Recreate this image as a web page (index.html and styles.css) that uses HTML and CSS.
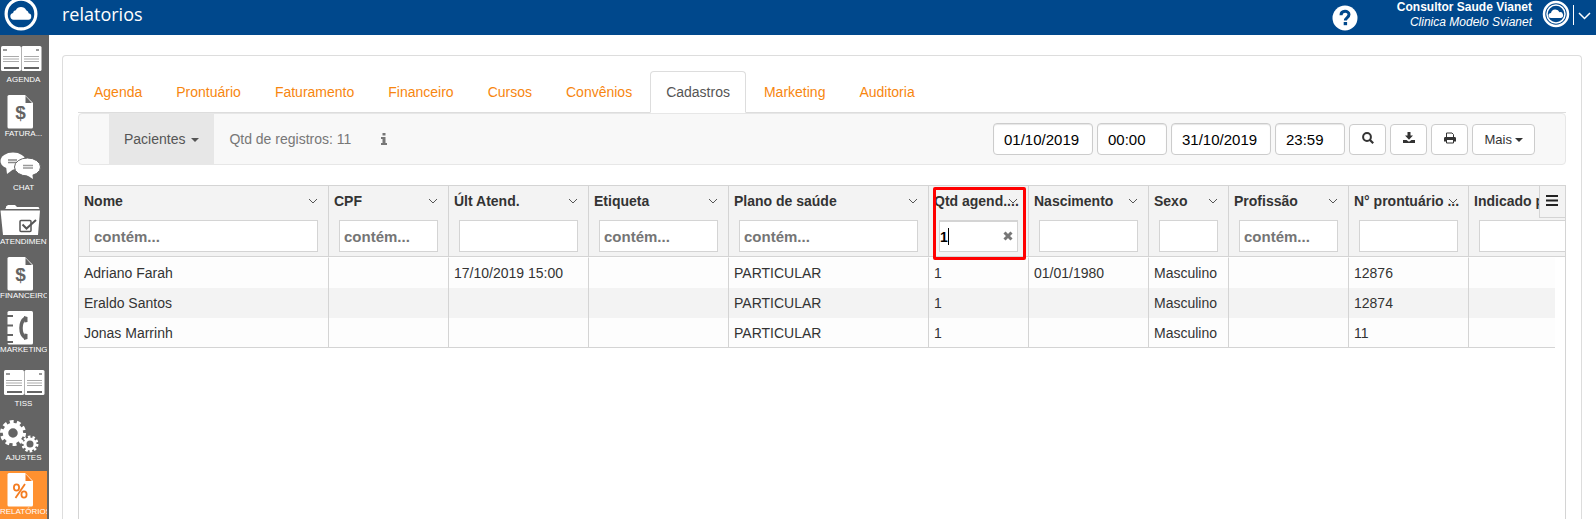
FILE: index.html
```html
<!DOCTYPE html>
<html lang="pt-BR">
<head>
    <meta charset="UTF-8">
    <meta name="viewport" content="width=device-width, initial-scale=1.0">
    <title>relatorios</title>
    <link rel="stylesheet" href="styles.css">
</head>
<body>

<!-- simbolos reutilizados -->
<svg class="sprite" width="0" height="0" aria-hidden="true">
    <symbol id="logo" viewBox="0 0 32 32">
        <circle cx="16" cy="16" r="14" fill="none" stroke="#fff" stroke-width="3"/>
        <path fill="#fff" d="M9 21.500a3.300 3.300 0 0 1-.5-6.500 3 3 0 0 1 2.600-2.600 5.500 5.500 0 0 1 9.800 0 3.200 3.200 0 0 1 2.300 3 3.100 3.100 0 0 1-.2 6.100z"/>
    </symbol>
    <symbol id="logo-small" viewBox="0 0 28 28">
        <circle cx="14" cy="14" r="12" fill="none" stroke="#fff" stroke-width="2.500"/>
        <circle cx="14" cy="14" r="9" fill="none" stroke="#fff" stroke-width="1.500"/>
        <path fill="#fff" d="M9 18a2.500 2.500 0 0 1 0-5 4.500 4.500 0 0 1 8.500-.8A3 3 0 0 1 19 18z"/>
    </symbol>
    <symbol id="book" viewBox="0 0 47 36">
        <rect x="1" y="7" width="20" height="25" rx="1.500" fill="#fff"/>
        <rect x="21.500" y="7" width="20" height="25" rx="1.500" fill="#fff"/>
        <path d="M3 11h4M36 11h3" stroke="#999" stroke-width="2"/>
        <path d="M3 17.500h16M3 20h16M3 22.500h16M24 17.500h15M24 20h15M24 22.500h15" stroke="#aaa"/>
        <path d="M4 29h15M24 29h15" stroke="#666" stroke-width="2"/>
    </symbol>
    <symbol id="doc" viewBox="0 0 47 36">
        <path d="M9 2h16l8 8v24a1.500 1.500 0 0 1-1.500 1.500H9A1.500 1.500 0 0 1 7.500 34V3.500A1.500 1.500 0 0 1 9 2z" fill="#fff"/>
        <path d="M25.500 3v7H32z" fill="currentColor"/>
    </symbol>
    <symbol id="down" viewBox="0 0 10 6">
        <path d="M1 1l4 4 4-4" fill="none" stroke="currentColor"/>
    </symbol>
</svg>

<header class="topbar">
    <a class="brand" href="#" aria-label="Início"><svg width="34" height="34"><use href="#logo"/></svg></a>
    <h1 class="page-title">relatorios</h1>
    <a class="help" href="#" aria-label="Ajuda">
        <svg width="26" height="26" viewBox="0 0 26 26">
            <circle cx="13" cy="13" r="12.500" fill="#fff"/>
            <path d="M9 10.200c0-5.200 8-5 8-.6 0 3-3.600 3-3.600 6" fill="none" stroke="#00488c" stroke-width="3"/>
            <rect x="11.700" y="17" width="3.400" height="3.200" fill="#00488c"/>
        </svg>
    </a>
    <div class="user">
        <strong>Consultor Saude Vianet</strong>
        <em>Clinica Modelo Svianet</em>
    </div>
    <button class="user-menu" aria-label="Menu do usuário">
        <svg width="28" height="28"><use href="#logo-small"/></svg>
        <span class="divider"></span>
        <svg class="chevron" width="13" height="8" viewBox="0 0 13 8"><path d="M1 1l5.500 5.500L12 1" fill="none" stroke="#fff" stroke-width="1.500"/></svg>
    </button>
</header>

<div class="layout">
    <nav class="sidebar">
        <a class="side-item" href="#">
            <svg viewBox="0 0 47 36"><use href="#book"/></svg>
            <span>AGENDA</span>
        </a>
        <a class="side-item" href="#">
            <svg viewBox="0 0 47 36"><use href="#doc"/><text class="glyph" x="20.500" y="26">$</text></svg>
            <span>FATURA...</span>
        </a>
        <a class="side-item" href="#">
            <svg viewBox="0 0 47 36">
                <ellipse cx="13" cy="14" rx="12.500" ry="8.500" fill="#fff"/>
                <path d="M6 19l1 8 8-6z" fill="#fff"/>
                <path d="M8 13h9M8 15.500h9" stroke="#888" stroke-width="1.500"/>
                <ellipse cx="27.500" cy="20" rx="13" ry="9" fill="#fff" stroke="#646464"/>
                <path d="M25 27l8 5-1-7z" fill="#fff"/>
                <path d="M23 18.500h10M23 21h10" stroke="#999" stroke-width="1.500"/>
            </svg>
            <span>CHAT</span>
        </a>
        <a class="side-item" href="#">
            <svg viewBox="0 0 47 36">
                <path d="M6 7V5.500L8 4h7l2 2h21.500l1 2H5z" fill="#fff"/>
                <path d="M.500 9.500h39.500L38 34H3z" fill="#fff"/>
                <rect x="20" y="19.500" width="11" height="11" rx="1" fill="none" stroke="#555" stroke-width="1.500"/>
                <path d="M22.500 23.500l4 4L36 19" fill="none" stroke="#555" stroke-width="2"/>
            </svg>
            <span>ATENDIMENTO</span>
        </a>
        <a class="side-item" href="#">
            <svg viewBox="0 0 47 36"><use href="#doc"/><text class="glyph" x="20.500" y="26">$</text></svg>
            <span>FINANCEIRO</span>
        </a>
        <a class="side-item" href="#">
            <svg viewBox="0 0 47 36">
                <rect x="7.500" y="2" width="25.500" height="33.500" rx="1.500" fill="#fff"/>
                <path d="M7 7h6M7 16.500h6M7 26h6M7 33h6" stroke="#646464" stroke-width="2"/>
                <path d="M25.500 9c-6 4-6 16 0 20" fill="none" stroke="#646464" stroke-width="3.500"/>
                <path d="M24 7l3.500 1v5l-3 .5zM24.500 24.500l3 .5v5L24 31z" fill="#646464"/>
            </svg>
            <span>MARKETING</span>
        </a>
        <a class="side-item" href="#">
            <svg viewBox="-3 0 47 36"><use href="#book" width="47" height="36"/></svg>
            <span>TISS</span>
        </a>
        <a class="side-item" href="#">
            <svg viewBox="0 0 47 36" fill="none" stroke="#fff">
                <circle cx="13" cy="16" r="7.500" stroke-width="5.500"/>
                <circle cx="13" cy="16" r="11" stroke-width="4" stroke-dasharray="3.760 3.150"/>
                <circle cx="30" cy="27" r="5" stroke-width="3"/>
                <circle cx="30" cy="27" r="7.200" stroke-width="2.500" stroke-dasharray="2.500 2.020"/>
            </svg>
            <span>AJUSTES</span>
        </a>
        <a class="side-item active" href="#">
            <svg viewBox="0 0 47 36"><use href="#doc"/>
                <g fill="none" stroke="currentColor" stroke-width="1.800">
                    <ellipse cx="16.500" cy="16.500" rx="2.600" ry="3.200"/>
                    <ellipse cx="24" cy="23.500" rx="2.600" ry="3.200"/>
                    <path d="M25 13L15.500 27"/>
                </g>
            </svg>
            <span>RELATÓRIOS</span>
        </a>
    </nav>

    <main class="panel">
        <ul class="tabs">
            <li><a href="#">Agenda</a></li>
            <li><a href="#">Prontuário</a></li>
            <li><a href="#">Faturamento</a></li>
            <li><a href="#">Financeiro</a></li>
            <li><a href="#">Cursos</a></li>
            <li><a href="#">Convênios</a></li>
            <li><a class="active" href="#">Cadastros</a></li>
            <li><a href="#">Marketing</a></li>
            <li><a href="#">Auditoria</a></li>
        </ul>

        <div class="toolbar">
            <button class="dropdown">Pacientes <span class="caret"></span></button>
            <span class="count">Qtd de registros: 11</span>
            <a class="info" href="#" aria-label="Informações">
                <svg width="6" height="12" viewBox="0 0 6 12"><path fill="currentColor" d="M1.500 0h3v2.500h-3zM0 4h4.500v6H6v2H0v-2h1.500V6H0z"/></svg>
            </a>
            <form class="filters">
                <input class="date" type="text" value="01/10/2019" aria-label="Data inicial">
                <input class="time" type="text" value="00:00" aria-label="Hora inicial">
                <input class="date" type="text" value="31/10/2019" aria-label="Data final">
                <input class="time" type="text" value="23:59" aria-label="Hora final">
                <button class="btn" type="button" aria-label="Pesquisar">
                    <svg width="12" height="12" viewBox="0 0 12 12"><circle cx="5" cy="5" r="3.900" fill="none" stroke="currentColor" stroke-width="2"/><path d="M8 8l3.200 3.200" stroke="currentColor" stroke-width="2.200"/></svg>
                </button>
                <button class="btn" type="button" aria-label="Baixar">
                    <svg width="12" height="12" viewBox="0 0 12 12"><path fill="currentColor" d="M4.500 0h3v3.500H10L6 7.700 2 3.500h2.500zM0 8h3.500L6 9.800 8.500 8H12v3H0z"/></svg>
                </button>
                <button class="btn" type="button" aria-label="Imprimir">
                    <svg width="12" height="12" viewBox="0 0 12 12"><path fill="none" stroke="currentColor" d="M2.500 6V1h5.500l1.500 1.500V6M2.500 8v3h7V8"/><path fill="currentColor" d="M0 6.500C0 5.500.500 5 1.500 5h9c1 0 1.500.500 1.500 1.500V9.500H9.500V8h-7v1.500H0z"/></svg>
                </button>
                <button class="btn more" type="button">Mais <span class="caret"></span></button>
            </form>
        </div>

        <div class="grid">
            <table>
                <colgroup>
                    <col class="w250"><col class="w120"><col class="w140"><col class="w140"><col class="w200"><col class="w100">
                    <col class="w120"><col class="w80"><col class="w120"><col class="w120"><col class="w120">
                </colgroup>
                <thead>
                    <tr>
                        <th><div class="title">Nome</div><svg class="sort"><use href="#down"/></svg><input type="text" placeholder="contém..." aria-label="Nome"></th>
                        <th><div class="title">CPF</div><svg class="sort"><use href="#down"/></svg><input type="text" placeholder="contém..." aria-label="CPF"></th>
                        <th><div class="title">Últ Atend.</div><svg class="sort"><use href="#down"/></svg><input type="text" aria-label="Últ Atend."></th>
                        <th><div class="title">Etiqueta</div><svg class="sort"><use href="#down"/></svg><input type="text" placeholder="contém..." aria-label="Etiqueta"></th>
                        <th><div class="title">Plano de saúde</div><svg class="sort"><use href="#down"/></svg><input type="text" placeholder="contém..." aria-label="Plano de saúde"></th>
                        <th class="marked">
                            <div class="title">Qtd agend....</div><svg class="sort"><use href="#down"/></svg><input class="editing" type="text" value="1" aria-label="Qtd agend.">
                            <span class="cursor"></span>
                            <button class="clear" aria-label="Limpar"><svg width="10" height="10" viewBox="0 0 10 10"><path d="M1.500 1.500l7 7M8.500 1.500l-7 7" stroke="currentColor" stroke-width="3"/></svg></button>
                        </th>
                        <th><div class="title">Nascimento</div><svg class="sort"><use href="#down"/></svg><input type="text" aria-label="Nascimento"></th>
                        <th><div class="title">Sexo</div><svg class="sort"><use href="#down"/></svg><input type="text" aria-label="Sexo"></th>
                        <th><div class="title">Profissão</div><svg class="sort"><use href="#down"/></svg><input type="text" placeholder="contém..." aria-label="Profissão"></th>
                        <th><div class="title">N° prontuário ...</div><svg class="sort"><use href="#down"/></svg><input type="text" aria-label="N° prontuário"></th>
                        <th><div class="title">Indicado por</div><input type="text" aria-label="Indicado por"></th>
                    </tr>
                </thead>
                <tbody>
                    <tr><td>Adriano Farah</td><td></td><td>17/10/2019 15:00</td><td></td><td>PARTICULAR</td><td>1</td><td>01/01/1980</td><td>Masculino</td><td></td><td>12876</td><td></td></tr>
                    <tr><td>Eraldo Santos</td><td></td><td></td><td></td><td>PARTICULAR</td><td>1</td><td></td><td>Masculino</td><td></td><td>12874</td><td></td></tr>
                    <tr><td>Jonas Marrinh</td><td></td><td></td><td></td><td>PARTICULAR</td><td>1</td><td></td><td>Masculino</td><td></td><td>11</td><td></td></tr>
                </tbody>
            </table>
            <div class="gutter"></div>
            <button class="grid-menu" aria-label="Menu da tabela">
                <svg width="12" height="11" viewBox="0 0 12 11"><path d="M0 1h12M0 5.500h12M0 10h12" stroke="#222" stroke-width="2"/></svg>
            </button>
        </div>
    </main>
</div>

</body>
</html>
```
FILE: styles.css
```css
* {
    box-sizing: border-box;
}
body {
    margin: 0;
    height: 100vh;
    overflow: hidden;
    display: flex;
    flex-direction: column;
    font-family: "Liberation Sans", Arial, sans-serif;
    font-size: 14px;
    line-height: 20px;
    color: #333;
    background-color: #fff;
}
a {
    text-decoration: none;
}
button, input {
    font-family: inherit;
    margin: 0;
}
button {
    cursor: pointer;
}
.sprite {
    position: absolute;
}

/* topo */
.topbar {
    flex: none;
    display: flex;
    align-items: flex-start;
    height: 35px;
    padding-right: 5px;
    color: #fff;
    background-color: #00488c;
}
.brand {
    width: 58px;
    padding-left: 4px;
    margin-top: -3px;
}
.page-title {
    flex: 1;
    margin: 0;
    padding-left: 4px;
    font-family: "Open Sans", sans-serif;
    font-size: 18px;
    font-weight: 400;
    line-height: 28px;
}
.help {
    margin: 5px 39px 0 0;
    height: 26px;
}
.user {
    display: flex;
    flex-direction: column;
    text-align: right;
    font-size: 12px;
    line-height: 15px;
}
.user-menu {
    display: flex;
    align-items: flex-start;
    margin-left: 10px;
    padding: 0;
    border: none;
    background: none;
}
.user-menu .divider {
    width: 1px;
    height: 20px;
    margin: 5px 4px 0 3px;
    background-color: #fff;
}
.user-menu .chevron {
    margin-top: 12px;
}

/* menu lateral */
.layout {
    flex: 1;
    min-height: 0;
    display: flex;
}
.sidebar {
    flex: none;
    width: 49px;
    padding: 4px 2px 0 0;
    overflow: hidden;
    background-color: #646464;
}
.side-item {
    display: block;
    height: 54px;
    overflow: hidden;
    color: #646464;
}
.side-item svg {
    display: block;
    width: 47px;
    height: 36px;
}
.side-item span {
    display: block;
    font-size: 8px;
    line-height: 10px;
    text-align: center;
    white-space: nowrap;
    color: #fff;
}
.side-item.active {
    color: #f47c20;
    background-color: #ff9130;
}
.side-item .glyph {
    font-size: 19px;
    font-weight: bold;
    text-anchor: middle;
    fill: currentColor;
}

/* painel */
.panel {
    flex: 1;
    min-width: 0;
    margin: 20px 14px 0 13px;
    padding: 15px 15px 0;
    display: flex;
    flex-direction: column;
    border: 1px solid #ddd;
    border-bottom: none;
    border-radius: 4px 4px 0 0;
}
.tabs {
    display: flex;
    gap: 2px;
    margin: 0;
    padding: 0;
    list-style: none;
    border-bottom: 1px solid #ddd;
}
.tabs a {
    display: block;
    margin-bottom: -1px;
    padding: 10px 15px;
    border: 1px solid transparent;
    border-radius: 4px 4px 0 0;
    color: #f7860f;
}
.tabs a.active {
    color: #555;
    background-color: #fff;
    border-color: #ddd #ddd #fff;
}

.toolbar {
    display: flex;
    align-items: center;
    height: 52px;
    padding: 0 30px;
    margin-bottom: 20px;
    border: 1px solid #e7e7e7;
    border-radius: 4px;
    color: #777;
    background-color: #f8f8f8;
}
.dropdown {
    align-self: stretch;
    padding: 0 15px;
    border: none;
    font-size: 14px;
    color: #555;
    background-color: #e7e7e7;
}
.caret {
    display: inline-block;
    margin-left: 2px;
    vertical-align: middle;
    border-top: 4px solid;
    border-left: 4px solid transparent;
    border-right: 4px solid transparent;
}
.count {
    margin: 0 30px 0 15px;
}
.info {
    color: #777;
}
.info svg {
    display: block;
}
.filters {
    display: flex;
    align-items: center;
    gap: 4px;
    margin-left: auto;
}
.filters input {
    height: 32px;
    padding: 0 10px;
    border: 1px solid #ccc;
    border-radius: 4px;
    font-size: 15px;
    color: #000;
    background-color: #fff;
    box-shadow: inset 0 1px 1px rgba(0, 0, 0, 0.1);
}
.filters .date {
    width: 100px;
}
.filters .time {
    width: 70px;
}
.btn {
    width: 37px;
    height: 31px;
    padding: 0;
    border: 1px solid #ccc;
    border-radius: 4px;
    font-size: 13px;
    color: #333;
    background-color: #fff;
}
.btn.more {
    width: 63px;
}
.btn .caret {
    margin-left: -1px;
}

/* tabela */
.grid {
    position: relative;
    flex: 1;
    overflow: hidden;
    border: 1px solid #d4d4d4;
    border-bottom: none;
}
.grid table {
    width: 1510px;
    table-layout: fixed;
    border-collapse: separate;
    border-spacing: 0;
}
.w80 { width: 80px; }
.w100 { width: 100px; }
.w120 { width: 120px; }
.w140 { width: 140px; }
.w200 { width: 200px; }
.w250 { width: 250px; }
.grid th {
    position: relative;
    height: 71px;
    padding: 0;
    text-align: left;
    vertical-align: top;
    border-right: 1px solid #d4d4d4;
    border-bottom: 1px solid #d4d4d4;
    background-color: #f3f3f3;
}
.grid .title {
    height: 34px;
    padding: 5px 0 0 5px;
    overflow: hidden;
    white-space: nowrap;
}
.grid .sort {
    position: absolute;
    top: 12px;
    right: 10px;
    width: 10px;
    height: 6px;
    color: #555;
}
.grid th input {
    display: block;
    width: calc(100% - 20px);
    height: 32px;
    margin-left: 10px;
    padding: 1px 4px 0;
    border: 1px solid #d4d4d4;
    border-radius: 0;
    font-size: 15px;
    font-weight: bold;
    color: #333;
    background-color: #fff;
}
.grid th input::placeholder {
    color: #757575;
}
.grid th input.editing {
    padding: 0;
    border-top-width: 2px;
    font-size: 14px;
    color: #000;
}
.marked::after {
    content: "";
    position: absolute;
    top: 1px;
    right: 2px;
    bottom: -4px;
    left: 4px;
    z-index: 1;
    border: 3px solid #f00;
    border-radius: 2px;
    pointer-events: none;
}
.cursor {
    position: absolute;
    top: 42px;
    left: 19px;
    width: 1px;
    height: 17px;
    background-color: #000;
}
.clear {
    position: absolute;
    top: 45px;
    right: 15px;
    width: 10px;
    height: 10px;
    padding: 0;
    border: none;
    line-height: 0;
    color: #777;
    background: none;
}
.grid td {
    height: 30px;
    padding: 0 5px;
    white-space: nowrap;
    border-right: 1px solid #d4d4d4;
    background-color: #fdfdfd;
}
.grid tr:first-child td {
    height: 31px;
    border-top: 1px solid #fff;
}
.grid tr:nth-child(even) td {
    background-color: #f3f3f3;
}
.grid tr:last-child td {
    border-bottom: 1px solid #d4d4d4;
}
.gutter {
    position: absolute;
    top: 71px;
    right: 0;
    bottom: 0;
    width: 10px;
    background-color: #fff;
}
.grid-menu {
    position: absolute;
    top: 0;
    right: 0;
    width: 26px;
    height: 32px;
    padding: 0 2px 0 0;
    border: solid #d4d4d4;
    border-width: 0 0 1px 1px;
    background-color: #f3f3f3;
}
```
